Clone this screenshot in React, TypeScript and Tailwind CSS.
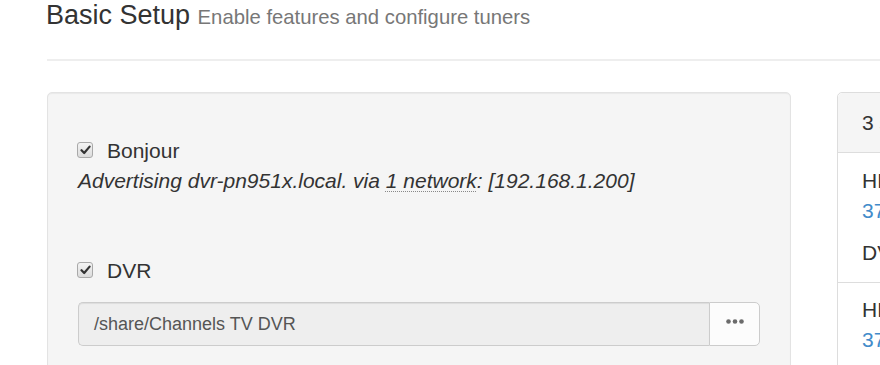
import React from 'react'

function Check() {
  return (
    <span className="flex h-[16px] w-[16px] shrink-0 items-center justify-center rounded-[3px] border border-[#a9a9a9] bg-gradient-to-b from-[#f3f3f3] to-[#dcdcdc]">
      <svg width="11" height="10" viewBox="0 0 11 10">
        <path d="M1.5 5.2 L4.2 8 L9.6 1.6" fill="none" stroke="#333" strokeWidth="2.2" strokeLinecap="round" strokeLinejoin="round" />
      </svg>
    </span>
  )
}

export default function App() {
  return (
    <div className="h-[365px] w-[880px] overflow-hidden bg-white font-['Liberation_Sans',Arial,sans-serif] text-[#333]">
      <div className="pl-[47px]">
        {/* page header */}
        <div className="w-[900px] border-b-2 border-[#eeeeee] pb-[29px]">
          <h1 className="-ml-[1px] h-[30px] whitespace-nowrap text-[27px] leading-[30px] font-normal">
            Basic Setup <small className="text-[20.3px] leading-none text-[#777]">Enable features and configure tuners</small>
          </h1>
        </div>

        <div className="mt-[31px] flex items-start gap-[46px]">
          {/* settings well */}
          <div className="h-[320px] w-[744px] shrink-0 rounded-[5px] border border-[#e3e3e3] bg-[#f5f5f5] px-[30px] pt-[43px] shadow-[inset_0_1px_1px_rgba(0,0,0,0.05)]">
            <label className="flex h-[30px] items-center gap-[14px] text-[21px] leading-[30px]">
              <span className="-ml-[1px] -mt-[2px]"><Check /></span>
              Bonjour
            </label>
            <div className="whitespace-nowrap text-[21px] leading-[30px] italic">
              Advertising dvr-pn951x.local. via{' '}
              <span className="underline decoration-dotted decoration-[#888] decoration-1 underline-offset-[3px]">1 network</span>
              : [192.168.1.200]
            </div>

            <label className="mt-[60px] flex h-[30px] items-center gap-[14px] text-[21px] leading-[30px]">
              <span className="-ml-[1px] -mt-[2px]"><Check /></span>
              DVR
            </label>
            <div className="mt-[16px] flex h-[44px]">
              <div className="flex flex-1 items-center rounded-l-[5px] border border-r-0 border-[#cccccc] bg-[#eeeeee] px-[15px] text-[18px] text-[#555] shadow-[inset_0_1px_1px_rgba(0,0,0,0.075)]">
                /share/Channels TV DVR
              </div>
              <button className="flex w-[51px] items-center justify-center rounded-r-[5px] border border-[#cccccc] bg-[#fcfcfc]">
                <svg className="-mt-[5px]" width="18" height="5" viewBox="0 0 18 5">
                  <circle cx="2.5" cy="2.5" r="2.3" fill="#6b6b6b" />
                  <circle cx="9" cy="2.5" r="2.3" fill="#6b6b6b" />
                  <circle cx="15.5" cy="2.5" r="2.3" fill="#6b6b6b" />
                </svg>
              </button>
            </div>
          </div>

          {/* devices panel */}
          <div className="min-h-[320px] w-[320px] shrink-0 rounded-[5px] border border-[#dddddd] bg-white">
            <div className="whitespace-nowrap rounded-t-[5px] border-b border-[#dddddd] bg-[#f5f5f5] pt-[15px] pb-[14px] pl-[24px] text-[21px] leading-[30px]">
              3 sources detected
            </div>
            <div className="whitespace-nowrap border-b border-[#dddddd] pt-[13px] pb-[14px] pl-[24px] text-[21px] leading-[30px]">
              <div>HDHomeRun PRIME</div>
              <div className="text-[#428bca]">3719A8B2 · 192.168.1.105</div>
              <div className="mt-[12px]">DVR tuners: 3</div>
            </div>
            <div className="whitespace-nowrap pt-[12px] pl-[24px] text-[21px] leading-[30px]">
              <div>HDHomeRun EXTEND</div>
              <div className="text-[#428bca]">3720C41F · 192.168.1.106</div>
            </div>
          </div>
        </div>
      </div>
    </div>
  )
}
